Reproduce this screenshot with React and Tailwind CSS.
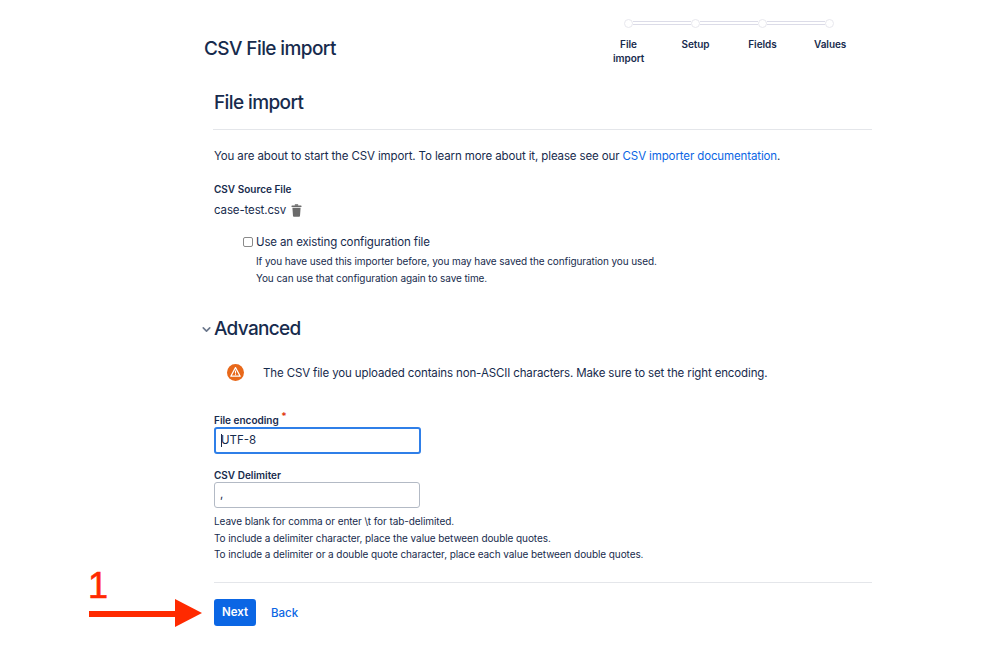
import React from 'react';
import { ChevronDown } from 'lucide-react';

const steps = ['File import', 'Setup', 'Fields', 'Values'];

const Stepper = () => (
  <div className="w-[268px] mr-[9px] pt-[18px]">
    <div className="flex items-center justify-between mx-[29px] h-[10px]">
      {[0, 1, 2, 3].map((i) => (
        <React.Fragment key={i}>
          <span className="w-[9px] h-[9px] rounded-full bg-white border border-[#e8e8ee] shrink-0" />
          {i < 3 && <span className="flex-1 h-[4px] border-y border-[#dcdce8] bg-white" />}
        </React.Fragment>
      ))}
    </div>
    <div className="grid grid-cols-4 mt-[9px]">
      {steps.map((s) => (
        <div key={s} className="text-center text-[10px] leading-[14px] font-semibold tracking-[-0.05px] text-[#172b4d] px-[18px]">
          {s}
        </div>
      ))}
    </div>
  </div>
);

const Trash = () => (
  <svg width="11" height="13" viewBox="0 0 11 13" fill="#6b6b6b">
    <rect x="0.5" y="1.5" width="10" height="1.6" rx="0.4" />
    <rect x="3.8" y="0.2" width="3.4" height="1.6" rx="0.4" />
    <path d="M1.4 3.8h8.2l-.6 8.2a.9.9 0 0 1-.9.8H2.9a.9.9 0 0 1-.9-.8z" />
  </svg>
);

const Warning = () => (
  <svg width="17" height="17" viewBox="0 0 17 17">
    <circle cx="8.5" cy="8.5" r="8.5" fill="#e8681a" />
    <path d="M8.5 3.6 13.2 12.2H3.8z" fill="none" stroke="#fff" strokeWidth="1.2" strokeLinejoin="round" />
    <rect x="8" y="6.6" width="1" height="3" fill="#fff" />
    <rect x="8" y="10.2" width="1" height="1" fill="#fff" />
  </svg>
);

const RedArrow = () => (
  <svg width="120" height="36" viewBox="0 0 120 36" className="absolute left-[88px] top-[595px]">
    <rect x="1" y="16" width="88" height="6" fill="#ff2a00" />
    <path d="M87 4 114 18 87 32z" fill="#ff2a00" />
  </svg>
);

export default function App() {
  return (
    <div className="relative w-[999px] h-[659px] bg-white overflow-hidden font-['Inter',sans-serif] text-[#172b4d]">
      <div className="w-[668px] ml-[204px]">
        <div className="flex justify-between h-[74px]">
          <h1 className="text-[19px] leading-[24px] tracking-[-0.6px] font-medium pt-[37px]">CSV File import</h1>
          <Stepper />
        </div>

        <div className="ml-[10px]">
          <h2 className="text-[19px] leading-[24px] tracking-[-0.6px] font-medium mt-[17px]">File import</h2>
          <div className="-ml-[1px] h-px bg-[#e4e6ea] mt-[14px]" />

          <p className="text-[11.5px] leading-[16px] tracking-[-0.12px] mt-[18px]">
            You are about to start the CSV import. To learn more about it, please see our{' '}
            <a className="text-[#0b66e4]">CSV importer documentation</a>.
          </p>

          <div className="text-[10px] leading-[14px] font-semibold mt-[18px]">CSV Source File</div>
          <div className="flex items-center gap-[5px] text-[11.5px] leading-[16px] tracking-[-0.13px] mt-[6px]">
            case-test.csv <Trash />
          </div>

          <div className="ml-[29px] mt-[16px]">
            <label className="flex items-center gap-[3px] text-[11.5px] leading-[16px] tracking-[-0.13px]">
              <span className="w-[10px] h-[10px] rounded-[2px] border border-[#8a8a8a] bg-white" />
              Use an existing configuration file
            </label>
            <p className="ml-[13px] mt-[3px] text-[10px] leading-[17px] tracking-[-0.09px]">
              If you have used this importer before, you may have saved the configuration you used.
              <br />
              You can use that configuration again to save time.
            </p>
          </div>

          <div className="relative mt-[30px]">
            <ChevronDown size={13} strokeWidth={3} className="absolute -left-[14px] top-[6px] text-[#6b778c]" />
            <h2 className="text-[19px] leading-[24px] tracking-[-0.7px] font-medium">Advanced</h2>
          </div>

          <div className="flex items-center ml-[13px] mt-[23px]">
            <Warning />
            <span className="ml-[19px] text-[11.5px] leading-[16px] tracking-[-0.13px]">
              The CSV file you uploaded contains non-ASCII characters. Make sure to set the right encoding.
            </span>
          </div>

          <div className="mt-[32px] text-[10px] leading-[14px] font-semibold">
            File encoding <span className="relative -top-[4px] text-[#de350b] leading-none">*</span>
          </div>
          <div className="w-[207px] h-[27px] mt-0 rounded-[3px] border-2 border-[#2f7fe8] flex items-center pl-[5px] text-[11.5px]">
            <span className="w-px h-[13px] -mr-px bg-[#172b4d]" />
            UTF-8
          </div>

          <div className="mt-[14px] text-[10px] leading-[14px] font-semibold">CSV Delimiter</div>
          <div className="w-[206px] h-[26px] mt-0 rounded-[3px] border border-[#b3bac5] flex items-center pl-[5px] text-[11.5px]">,</div>

          <p className="mt-[5px] text-[10px] leading-[16.5px] tracking-[-0.08px]">
            Leave blank for comma or enter \t for tab-delimited.
            <br />
            To include a delimiter character, place the value between double quotes.
            <br />
            To include a delimiter or a double quote character, place each value between double quotes.
          </p>

          <div className="h-px bg-[#e4e6ea] mt-[19px]" />

          <div className="flex items-center mt-[16px]">
            <button className="w-[42px] h-[27px] pt-[2px] rounded-[3px] bg-[#0b66e4] text-white text-[11.5px] font-semibold">Next</button>
            <a className="ml-[15px] pt-[3px] text-[11.5px] text-[#0b66e4] font-medium">Back</a>
          </div>
        </div>
      </div>

      <span className="absolute left-[88px] top-[563px] text-[#ff2a00] text-[36px] leading-[46px] [-webkit-text-stroke:0.6px_#ff2a00] font-['Liberation_Sans',sans-serif]">1</span>
      <RedArrow />
    </div>
  );
}
